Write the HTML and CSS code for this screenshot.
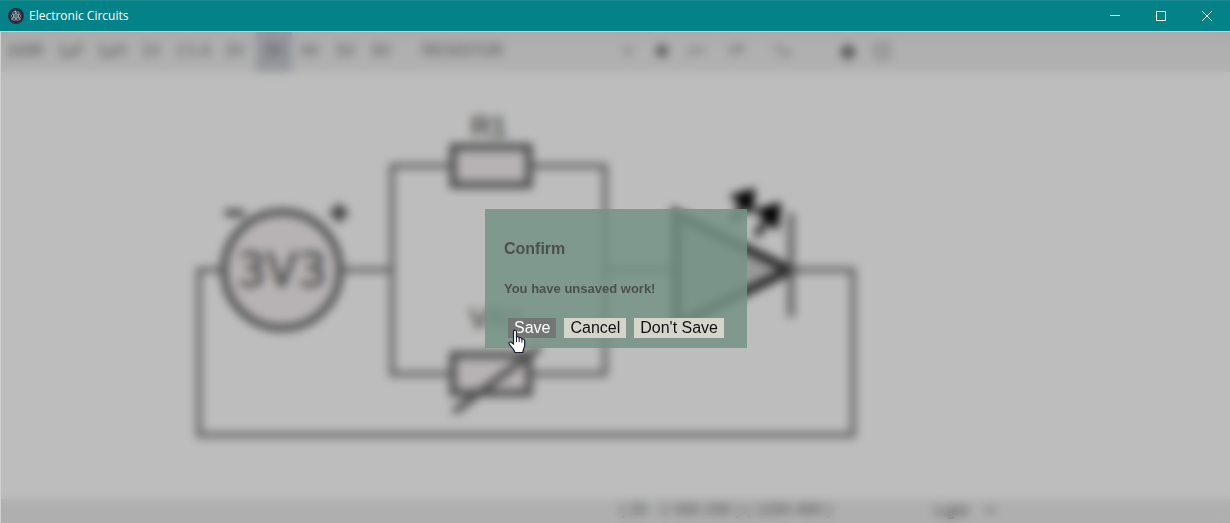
FILE: index.html
```html
<!DOCTYPE html>
<html lang="en">
<head>
<meta charset="utf-8">
<title>Electronic Circuits</title>
<link rel="stylesheet" href="styles.css">
</head>
<body>
<header class="titlebar">
  <svg class="app-icon" viewBox="0 0 16 16" aria-hidden="true">
    <circle cx="8" cy="8" r="8" fill="#2b2e3b"/>
    <g fill="none" stroke="#9fb6c0" stroke-width=".7">
      <ellipse cx="8" cy="8" rx="5" ry="2"/>
      <ellipse cx="8" cy="8" rx="5" ry="2" transform="rotate(60 8 8)"/>
      <ellipse cx="8" cy="8" rx="5" ry="2" transform="rotate(120 8 8)"/>
    </g>
    <g fill="#c3d5dc"><circle cx="8" cy="8" r=".8"/><circle cx="7.5" cy="3.2" r=".7"/><circle cx="4" cy="11" r=".7"/><circle cx="12" cy="11" r=".7"/></g>
  </svg>
  <h1 class="app-title">Electronic Circuits</h1>
  <button class="window-button" aria-label="Minimize"><svg width="10" height="10"><path d="M0 4.500H10"/></svg></button>
  <button class="window-button" aria-label="Maximize"><svg width="10" height="10"><path d="M.5 .5H9.500V9.500H.5Z"/></svg></button>
  <button class="window-button" aria-label="Close"><svg width="10" height="10"><path d="M0 0L10 10M10 0L0 10"/></svg></button>
</header>

<div class="stage">
  <main class="editor" inert>
    <nav class="toolbar">
      <button class="tool tool-wide">100R</button>
      <button class="tool tool-wide">1µF</button>
      <button class="tool">1µH</button>
      <button class="tool tool-medium">1V</button>
      <button class="tool tool-medium">1'1.0</button>
      <button class="tool tool-medium">2V</button>
      <button class="tool selected">3V</button>
      <button class="tool">4V</button>
      <button class="tool">5V</button>
      <button class="tool">6V</button>
      <span class="part-name">RESISTOR</span>
      <div class="actions">
        <button class="tool" aria-label="Add"><svg width="16" height="16"><path d="M8 4V12M4 8H12"/></svg></button>
        <button class="tool" aria-label="Node"><svg width="16" height="16"><circle class="solid" cx="8" cy="8" r="6"/></svg></button>
        <button class="tool" aria-label="Wire"><svg width="20" height="16"><path d="M1 12L8 5L11 9L19 5"/></svg></button>
      </div>
      <div class="actions transforms">
        <button class="tool tool-medium" aria-label="Rotate"><svg width="16" height="16"><path d="M3 13V4H14L8 10"/></svg></button>
        <button class="tool tool-medium" aria-label="Flip"><svg width="18" height="16"><path d="M1 5H8L11 11H17V6"/></svg></button>
      </div>
      <div class="actions">
        <button class="tool" aria-label="Save"><svg width="16" height="16"><circle class="solid" cx="8" cy="9" r="7"/></svg></button>
        <button class="tool" aria-label="Open"><svg width="16" height="16"><path d="M2 2H14V14H2Z"/></svg></button>
      </div>
    </nav>

    <div class="canvas">
      <svg class="circuit" width="1229" height="427" viewBox="1 72 1229 427" role="img" aria-label="Circuit diagram">
        <g class="wire">
          <path d="M224 270H199V435H853V270H791"/>
          <path d="M342 270H392M452 166H392V374H452M530 166H605V374H530M605 270H676"/>
        </g>
        <g class="part">
          <circle cx="282" cy="270" r="58"/>
          <rect x="453" y="147" width="76" height="38"/>
          <rect x="453" y="355" width="76" height="38"/>
          <path d="M454 412L540 347"/>
        </g>
        <path class="polarity" d="M225 213H244M330 213H348M339 204V222"/>
        <path class="diode" d="M676 214V326L790 270Z"/>
        <path class="cathode" d="M791 213V317"/>
        <path class="rays" d="M733 222L745 202M756 236L770 216"/>
        <path class="ray-heads" d="M729 196L755 188L753 215ZM754 210L781 202L778 231Z"/>
        <text class="value" x="282" y="286">3V3</text>
        <text class="label" x="489" y="136">R1</text>
        <text class="label" x="497" y="328">VR1</text>
      </svg>
    </div>

    <footer class="statusbar">
      <span class="position">( 20 : 1  500 200 ) ( 1200 400 )</span>
      <select class="theme" aria-label="Theme"><option>Light</option></select>
    </footer>
  </main>

  <div class="overlay">
    <section class="dialog" role="dialog" aria-modal="true" aria-labelledby="dialog-title">
      <h2 class="dialog-title" id="dialog-title">Confirm</h2>
      <p class="dialog-text">You have unsaved work!</p>
      <div class="dialog-buttons">
        <button class="dialog-button active">Save</button>
        <button class="dialog-button">Cancel</button>
        <button class="dialog-button">Don't Save</button>
      </div>
      <svg class="pointer" width="19" height="25" viewBox="0 0 19 25" aria-hidden="true">
        <path d="M6 1.500C7.300 .5 8.500 1.300 8.500 3V8C9.500 7.300 11 7.700 11.200 9C12.300 8.300 13.700 8.800 13.900 10C15.200 9.500 16.700 10.200 16.700 12V16C16.700 18.500 15 20.500 14.800 23.500H7C6.500 20.500 3.500 18.500 1.300 15.300C.5 13.600 1.800 12.500 3.300 13.300L5.500 15V3C5.500 2.300 5.600 1.800 6 1.500Z" fill="#fff" stroke="#1b1c2b" stroke-width="1.200"/>
        <path d="M8.500 8V13M11.200 9V13M13.900 10V13.500" fill="none" stroke="#1b1c2b"/>
      </svg>
    </section>
  </div>
</div>
</body>
</html>
```
FILE: styles.css
```css
* { box-sizing: border-box; }

body {
  margin: 0;
  height: 100vh;
  display: flex;
  flex-direction: column;
  overflow: hidden;
  font-family: "Liberation Sans", Arial, sans-serif;
  background: #bdbdbd;
}

button, select {
  border: 0;
  margin: 0;
  padding: 0;
  font: inherit;
  color: inherit;
  background: none;
}

/* Title bar */
.titlebar {
  flex: none;
  height: 31px;
  display: flex;
  align-items: center;
  padding-left: 8px;
  background: #038387;
  border-top: 1px solid #1a8a8e;
  color: #fff;
}
.app-icon { width: 16px; height: 16px; margin-right: 5px; }
.app-title {
  flex: 1;
  margin: 0;
  font: 400 12px/16px "Open Sans", "Noto Sans", sans-serif;
}
.window-button {
  width: 46px;
  height: 28px;
  display: grid;
  place-items: center;
}
.window-button svg { fill: none; stroke: #fff; overflow: visible; }

/* Editor and overlay share one grid cell */
.stage {
  flex: 1;
  min-height: 0;
  display: grid;
  grid-template: minmax(0, 1fr) / minmax(0, 1fr);
  border-top: 1px solid #b5d3d3;
  border-left: 1px solid #d0d0d0;
}
.editor, .overlay { grid-area: 1 / 1; }

.editor {
  display: flex;
  flex-direction: column;
  overflow: hidden;
}
.toolbar {
  flex: none;
  height: 40px;
  display: flex;
  align-items: center;
  padding-left: 1px;
  background: linear-gradient(#a8aaab, #b0b0b0 16px);
  color: #555;
  font-size: 16px;
}
.tool {
  width: 36px;
  height: 40px;
  padding-bottom: 2px;
  display: grid;
  place-items: center;
}
.tool-wide { width: 46px; }
.tool-medium { width: 42px; }
.tool svg { fill: none; stroke: #666; stroke-width: 2; }
.tool .solid { fill: #555; stroke: none; }
.selected { background: #94969c; }
.part-name { width: 211px; padding: 0 0 2px 22px; }
.actions { display: flex; }
.actions .tool { width: 34px; }
.actions .tool-medium { width: 44px; }
.transforms { margin: 0 28px 0 2px; }

.canvas { flex: 1; min-height: 0; overflow: hidden; background: #bdbdbd; }
.circuit { display: block; }
.wire { fill: none; stroke: #5a5a5a; stroke-width: 5; }
.part { fill: #b7b3b4; stroke: #4a4a4a; stroke-width: 7; }
.polarity { stroke: #333; stroke-width: 6; }
.diode { fill: #999; stroke: #222; stroke-width: 9; }
.cathode { stroke: #555; stroke-width: 6; }
.rays { fill: none; stroke: #222; stroke-width: 7; }
.ray-heads { fill: #000; }
.value, .label { fill: #4a4a4a; text-anchor: middle; }
.value { font: 46px "DejaVu Sans", sans-serif; stroke: #4a4a4a; }
.label { font: 28px "Liberation Sans", sans-serif; stroke: #4a4a4a; }

.statusbar {
  flex: none;
  height: 24px;
  display: flex;
  justify-content: flex-end;
  align-items: center;
  gap: 98px;
  padding: 0 232px 2px 0;
  background: #afafaf;
  color: #555;
  font-size: 16px;
}
.theme { width: 68px; }

/* Confirmation dialog */
.overlay {
  display: grid;
  place-items: center;
  padding: 2px 0 0 1px;
  backdrop-filter: blur(5px);
}
.dialog {
  position: relative;
  min-width: 262px;
  padding: 31px 19px 10px;
  background: rgba(116, 147, 135, .85);
  color: #4c4f4e;
}
.dialog-title { margin: 0 0 23px; font-size: 16px; line-height: 18px; }
.dialog-text { margin: 0 0 21px; font-size: 13px; font-weight: 700; line-height: 16px; }
.dialog-buttons { display: flex; gap: 8px; padding: 0 4px; }
.dialog-button {
  height: 20px;
  padding: 0 6px;
  background: #d6d5cc;
  color: #111;
  font-size: 16px;
  line-height: 20px;
}
.dialog-button.active { background: #727675; color: #fff; }
.pointer { position: absolute; left: 23px; top: 120px; }
```
